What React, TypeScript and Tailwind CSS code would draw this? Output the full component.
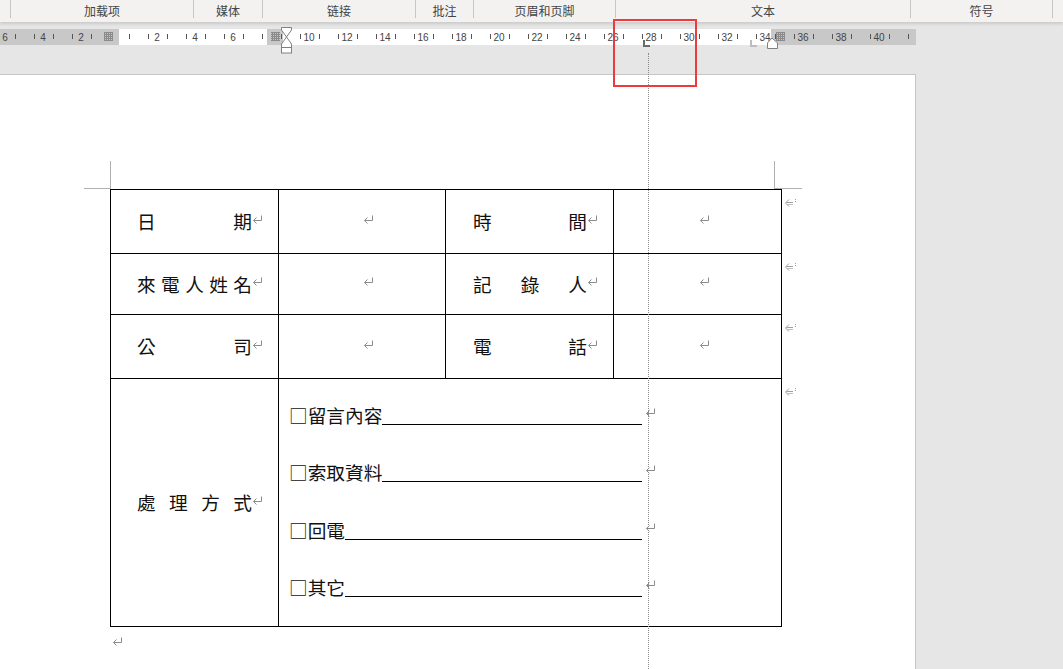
import React from "react"

const groups = [
  { label: "", w: "w-[11px]" },
  { label: "加载项", w: "w-[183px]" },
  { label: "媒体", w: "w-[69px]" },
  { label: "链接", w: "w-[153px]" },
  { label: "批注", w: "w-[58px]" },
  { label: "页眉和页脚", w: "w-[142px]" },
  { label: "文本", w: "w-[295px]" },
  { label: "符号", w: "w-[142px]" },
]

const CM = 19
const ZERO = 119

function ParaMark({ className = "" }: { className?: string }) {
  return (
    <svg width="11" height="9" viewBox="0 0 11 9" className={`shrink-0 ${className}`}>
      <path d="M9.5 0.5 V5.5 H1.5 M4.5 2.5 L1.5 5.5 L4.5 8.5" fill="none" stroke="#8c8c8c" strokeWidth="1" />
    </svg>
  )
}

function RowMark() {
  return (
    <svg width="13" height="10" viewBox="0 0 13 10" className="shrink-0">
      <path d="M5 1.5 L1.5 5 L5 8.5 M2.5 4.5 H9" fill="none" stroke="#a0a0a0" strokeWidth="1" />
      <path d="M2.5 6.5 H9" fill="none" stroke="#c0c0c0" strokeWidth="1" />
      <rect x="11" y="1" width="1" height="1" fill="#a0a0a0" />
      <rect x="11" y="3" width="1" height="1" fill="#a0a0a0" />
    </svg>
  )
}

function GridIcon({ x }: { x: number }) {
  return <rect x={x} y={8} width={9} height={9} fill="url(#rgrid)" />
}

function Ruler() {
  const ticks: number[] = []
  for (let k = -7; k <= 41; k++) {
    const x = ZERO + (k + 0.5) * CM
    if (x > 0 && x < 916) ticks.push(x)
  }
  const nums: number[] = []
  for (let n = -6; n <= 40; n += 2) {
    if (n !== 0 && n !== 8) nums.push(n)
  }
  return (
    <svg width="916" height="32" className="block overflow-visible">
      <defs>
        <pattern id="rgrid" width="2" height="2" patternUnits="userSpaceOnUse">
          <rect width="2" height="2" fill="#8a8a8a" />
          <rect x="1" y="1" width="1" height="1" fill="#c4c4c4" />
        </pattern>
      </defs>
      <rect x="0" y="5" width="916" height="16" fill="#c8c8c8" />
      <rect x="119" y="5" width="148" height="16" fill="#ffffff" />
      <rect x="283" y="5" width="488" height="16" fill="#ffffff" />
      {ticks.map((x) => (
        <rect key={x} x={Math.round(x)} y={10} width={1} height={5} fill="#555" />
      ))}
      {nums.map((n) => (
        <text
          key={n}
          x={ZERO + n * CM}
          y={17}
          textAnchor="middle"
          fontSize="10"
          fill="#444"
          fontFamily="'Liberation Sans', Arial, sans-serif"
        >
          {Math.abs(n)}
        </text>
      ))}
      <GridIcon x={104} />
      <GridIcon x={271} />
      <GridIcon x={776} />
      {/* hanging / first-line indent */}
      <path d="M281.5 3.5 H291.5 V6 L286.5 13 L281.5 6 Z" fill="#fff" stroke="#808080" />
      <path d="M286.5 13 L291.5 20 V23.5 H281.5 V20 Z" fill="#fff" stroke="#808080" />
      <rect x="281.5" y="23.5" width="10" height="5.5" fill="#fff" stroke="#808080" />
      {/* right indent */}
      <path d="M772 14 L777.5 19 V24.5 H767.5 V19 Z" fill="#fff" stroke="#808080" />
      {/* tab stops */}
      <path d="M644 16 V22 H650" fill="none" stroke="#6b6b6b" strokeWidth="2" />
      <path d="M751 16 V22 H757" fill="none" stroke="#bdbdbd" strokeWidth="2" />
    </svg>
  )
}

function Label({ chars, className }: { chars: string[]; className: string }) {
  return (
    <div className="flex items-center -mt-[2px]">
      <div className={`flex justify-between ${className}`}>
        {chars.map((c, i) => (
          <span key={i}>{c}</span>
        ))}
      </div>
      <ParaMark className="-mt-[3px]" />
    </div>
  )
}

function EmptyCell() {
  return (
    <div className="bg-white flex items-center justify-center">
      <ParaMark className="ml-[13px] -mt-[5px]" />
    </div>
  )
}

const options = ["□留言內容", "□索取資料", "□回電", "□其它"]

export default function App() {
  return (
    <div
      className="relative w-[1063px] h-[669px] overflow-hidden bg-[#e6e6e6] flex flex-col"
      style={{ fontFamily: "'Noto Sans CJK TC', 'Noto Sans CJK SC', sans-serif" }}
    >
      {/* Ribbon group labels */}
      <div className="relative z-10 h-[22px] bg-[#f3f2f1] flex shadow-[0_2px_3px_rgba(0,0,0,0.12)]">
        {groups.map((g, i) => (
          <div
            key={i}
            className={`${g.w} shrink-0 h-[18px] border-r border-[#c8c6c4] flex items-center justify-center text-[12px] text-[#444] pt-[4px]`}
            style={{ fontFamily: "'Noto Sans CJK SC', sans-serif" }}
          >
            {g.label}
          </div>
        ))}
      </div>

      {/* Ruler */}
      <div className="h-[52px] shrink-0 pt-[2px]">
        <Ruler />
      </div>

      {/* Page */}
      <div className="relative flex-1 w-[916px] bg-white border-t border-r border-[#c6c6c6]">
        {/* crop marks */}
        <div className="absolute left-[110px] top-[86px] w-px h-[28px] bg-[#b0b0b0]" />
        <div className="absolute left-[84px] top-[113px] w-[26px] h-px bg-[#b0b0b0]" />
        <div className="absolute left-[774px] top-[86px] w-px h-[27px] bg-[#b0b0b0]" />
        <div className="absolute left-[774px] top-[113px] w-[28px] h-px bg-[#b0b0b0]" />

        <div className="pl-[110px] pt-[114px] text-[18.67px] leading-[19px] text-[#111]">
          <div className="flex">
            <div className="grid grid-cols-[167px_166px_167px_167px] grid-rows-[63px_60px_63px_247px] gap-px bg-black p-px w-max">
              <div className="bg-white flex items-center pl-[26px]">
                <Label chars={["日", "期"]} className="w-[115px]" />
              </div>
              <EmptyCell />
              <div className="bg-white flex items-center pl-[27px]">
                <Label chars={["時", "間"]} className="w-[114px]" />
              </div>
              <EmptyCell />

              <div className="bg-white flex items-center pl-[26px]">
                <Label chars={["來", "電", "人", "姓", "名"]} className="w-[115px]" />
              </div>
              <EmptyCell />
              <div className="bg-white flex items-center pl-[27px]">
                <Label chars={["記", "錄", "人"]} className="w-[114px]" />
              </div>
              <EmptyCell />

              <div className="bg-white flex items-center pl-[26px]">
                <Label chars={["公", "司"]} className="w-[115px]" />
              </div>
              <EmptyCell />
              <div className="bg-white flex items-center pl-[27px]">
                <Label chars={["電", "話"]} className="w-[114px]" />
              </div>
              <EmptyCell />

              <div className="bg-white flex items-center pl-[26px]">
                <Label chars={["處", "理", "方", "式"]} className="w-[115px]" />
              </div>
              <div className="col-span-3 bg-white flex flex-col justify-center pl-[10px] pb-[2px]">
                {options.map((o) => (
                  <div key={o} className="h-[57.5px] flex items-center">
                    <div className="w-[353px] flex items-center">
                      <span className="shrink-0 -mt-[2px]">{o}</span>
                      <span className="flex-1 h-[19px] border-b border-black" />
                    </div>
                    <ParaMark className="ml-[3px] -mt-[6px]" />
                  </div>
                ))}
              </div>
            </div>

            {/* end-of-row marks */}
            <div className="flex flex-col pl-[2px]">
              <div className="h-[64px] pt-[9px]"><RowMark /></div>
              <div className="h-[61px] pt-[9px]"><RowMark /></div>
              <div className="h-[64px] pt-[9px]"><RowMark /></div>
              <div className="h-[64px] pt-[9px]"><RowMark /></div>
            </div>
          </div>
          <div className="pl-[2px] pt-[10px]">
            <ParaMark />
          </div>
        </div>
      </div>

      {/* dotted alignment guide */}
      <div className="absolute z-20 left-[648px] top-[53px] bottom-0 border-l border-dotted border-[#8a8a8a]" />

      {/* highlight box */}
      <div className="absolute z-20 left-[613px] top-[19px] w-[84px] h-[68px] border-2 border-[#ee3a3a]" />
    </div>
  )
}
